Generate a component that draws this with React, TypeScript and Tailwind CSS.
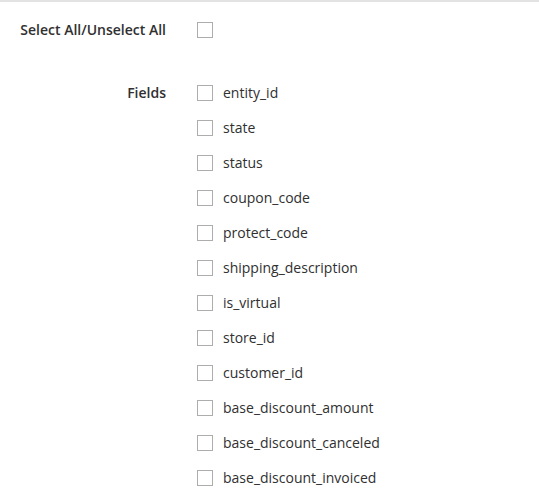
import React, { useState } from 'react';

const fields = [
  'entity_id',
  'state',
  'status',
  'coupon_code',
  'protect_code',
  'shipping_description',
  'is_virtual',
  'store_id',
  'customer_id',
  'base_discount_amount',
  'base_discount_canceled',
  'base_discount_invoiced',
];

const Box: React.FC<{ checked: boolean; onClick: () => void }> = ({ checked, onClick }) => (
  <button
    type="button"
    onClick={onClick}
    className="w-4 h-4 shrink-0 border border-[#adadad] bg-white flex items-center justify-center"
  >
    {checked && (
      <svg viewBox="0 0 16 16" className="w-3 h-3" fill="none" stroke="#514943" strokeWidth="2">
        <path d="M3 8l3 3 7-7" />
      </svg>
    )}
  </button>
);

const App: React.FC = () => {
  const [selected, setSelected] = useState<string[]>([]);
  const allChecked = selected.length === fields.length;

  const toggle = (name: string) =>
    setSelected((prev) => (prev.includes(name) ? prev.filter((f) => f !== name) : [...prev, name]));

  return (
    <div className="min-h-[503px] bg-white border-t-2 border-[#e3e3e3] text-[14px] text-[#303030] font-['Open_Sans',sans-serif]">
      <div className="flex items-center pt-[20px]">
        <div className="w-[166px] text-right font-semibold leading-4">Select All/Unselect All</div>
        <div className="ml-[31px] flex items-center">
          <Box checked={allChecked} onClick={() => setSelected(allChecked ? [] : [...fields])} />
        </div>
      </div>

      <div className="flex mt-[47px]">
        <div className="w-[166px] text-right font-semibold leading-4">Fields</div>
        <div className="ml-[31px] flex flex-col gap-[19px]">
          {fields.map((f) => (
            <label key={f} className="flex items-center gap-[10px] leading-4 cursor-pointer">
              <Box checked={selected.includes(f)} onClick={() => toggle(f)} />
              <span>{f}</span>
            </label>
          ))}
        </div>
      </div>
    </div>
  );
};

export default App;
